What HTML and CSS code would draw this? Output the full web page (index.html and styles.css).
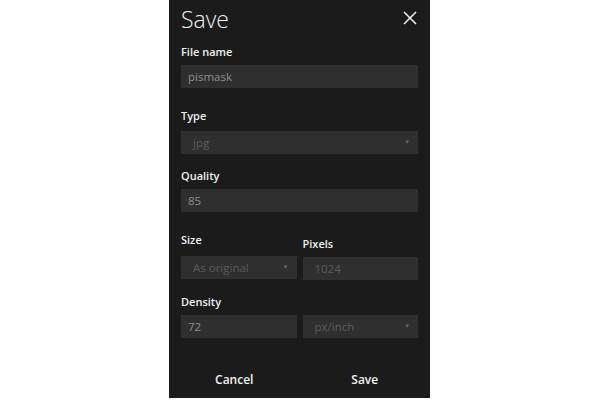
FILE: index.html
```html
<!DOCTYPE html>
<html>
<head>
<meta charset="utf-8">
<link rel="stylesheet" href="styles.css">
</head>
<body>
<div class="page">
  <div class="dialog">
    <div class="header">
      <h1 class="title">Save</h1>
      <button class="close" aria-label="Close">
        <svg width="14" height="14" viewBox="0 0 14 14"><path d="M1 1L13 13M13 1L1 13" stroke="#f2f2f2" stroke-width="1.5" fill="none"/></svg>
      </button>
    </div>
    <div class="field first">
      <label class="label">File name</label>
      <div class="input">pismask</div>
    </div>
    <div class="field wide">
      <label class="label type-label">Type</label>
      <div class="input select disabled">jpg<span class="caret">▼</span></div>
    </div>
    <div class="field">
      <label class="label">Quality</label>
      <div class="input">85</div>
    </div>
    <div class="row wide">
      <div class="field col">
        <label class="label size-label">Size</label>
        <div class="input select disabled">As original<span class="caret">▼</span></div>
      </div>
      <div class="field col">
        <label class="label low">Pixels</label>
        <div class="input disabled">1024</div>
      </div>
    </div>
    <div class="row">
      <div class="field col">
        <label class="label">Density</label>
        <div class="input">72</div>
      </div>
      <div class="field col">
        <label class="label hidden">&nbsp;</label>
        <div class="input select disabled">px/inch<span class="caret">▼</span></div>
      </div>
    </div>
    <div class="actions">
      <button class="btn">Cancel</button>
      <button class="btn">Save</button>
    </div>
  </div>
</div>
</body>
</html>
```
FILE: styles.css
```css
html, body {
  margin: 0;
  padding: 0;
  background: #ffffff;
}
.page {
  width: 600px;
  height: 400px;
  display: flex;
  justify-content: center;
}
.dialog {
  width: 261px;
  height: 398px;
  margin-left: -1px;
  background: #1b1b1b;
  box-sizing: border-box;
  padding: 0 12px;
  font-family: "Open Sans", sans-serif;
  display: flex;
  flex-direction: column;
}
.header {
  display: flex;
  justify-content: space-between;
  align-items: center;
  height: 38px;
}
.title {
  margin: 0;
  font-size: 23px;
  font-weight: 300;
  color: #f2f2f2;
  line-height: 38px;
}
.close {
  background: none;
  border: none;
  padding: 0;
  width: 14px;
  height: 14px;
  margin-right: 1px;
  margin-top: -2px;
  display: flex;
}
.field {
  display: flex;
  flex-direction: column;
  margin-top: 14px;
}
.field.first {
  margin-top: 6px;
}
.wide,
.row.wide {
  margin-top: 20px;
}
.row .field {
  margin-top: 0;
}
.label {
  font-size: 11px;
  font-weight: 600;
  color: #efefef;
  line-height: 16px;
  height: 16px;
  margin-bottom: 5px;
}
.label.type-label {
  margin-bottom: 7px;
}
.label.size-label {
  margin-bottom: 8px;
}
.label.low {
  margin-top: 4px;
}
.input {
  height: 23px;
  background: #2f2f2f;
  color: #8e8e8e;
  font-size: 11.5px;
  line-height: 23px;
  padding: 0 10px 0 7px;
  box-sizing: border-box;
  position: relative;
}
.input.disabled {
  color: #5c5c5c;
  padding-left: 12px;
}
.caret {
  position: absolute;
  right: 8px;
  top: 0;
  font-size: 6px;
  color: #6a6a6a;
}
.row {
  display: flex;
  gap: 6px;
  margin-top: 14px;
}
.col {
  flex: 1;
}
.hidden {
  visibility: hidden;
}
.actions {
  display: flex;
  margin: auto -12px 9px;
}
.btn {
  flex: 1;
  background: none;
  border: none;
  color: #f2f2f2;
  font-family: "Open Sans", sans-serif;
  font-weight: 600;
  font-size: 12px;
  height: 20px;
  padding: 0;
}
```
